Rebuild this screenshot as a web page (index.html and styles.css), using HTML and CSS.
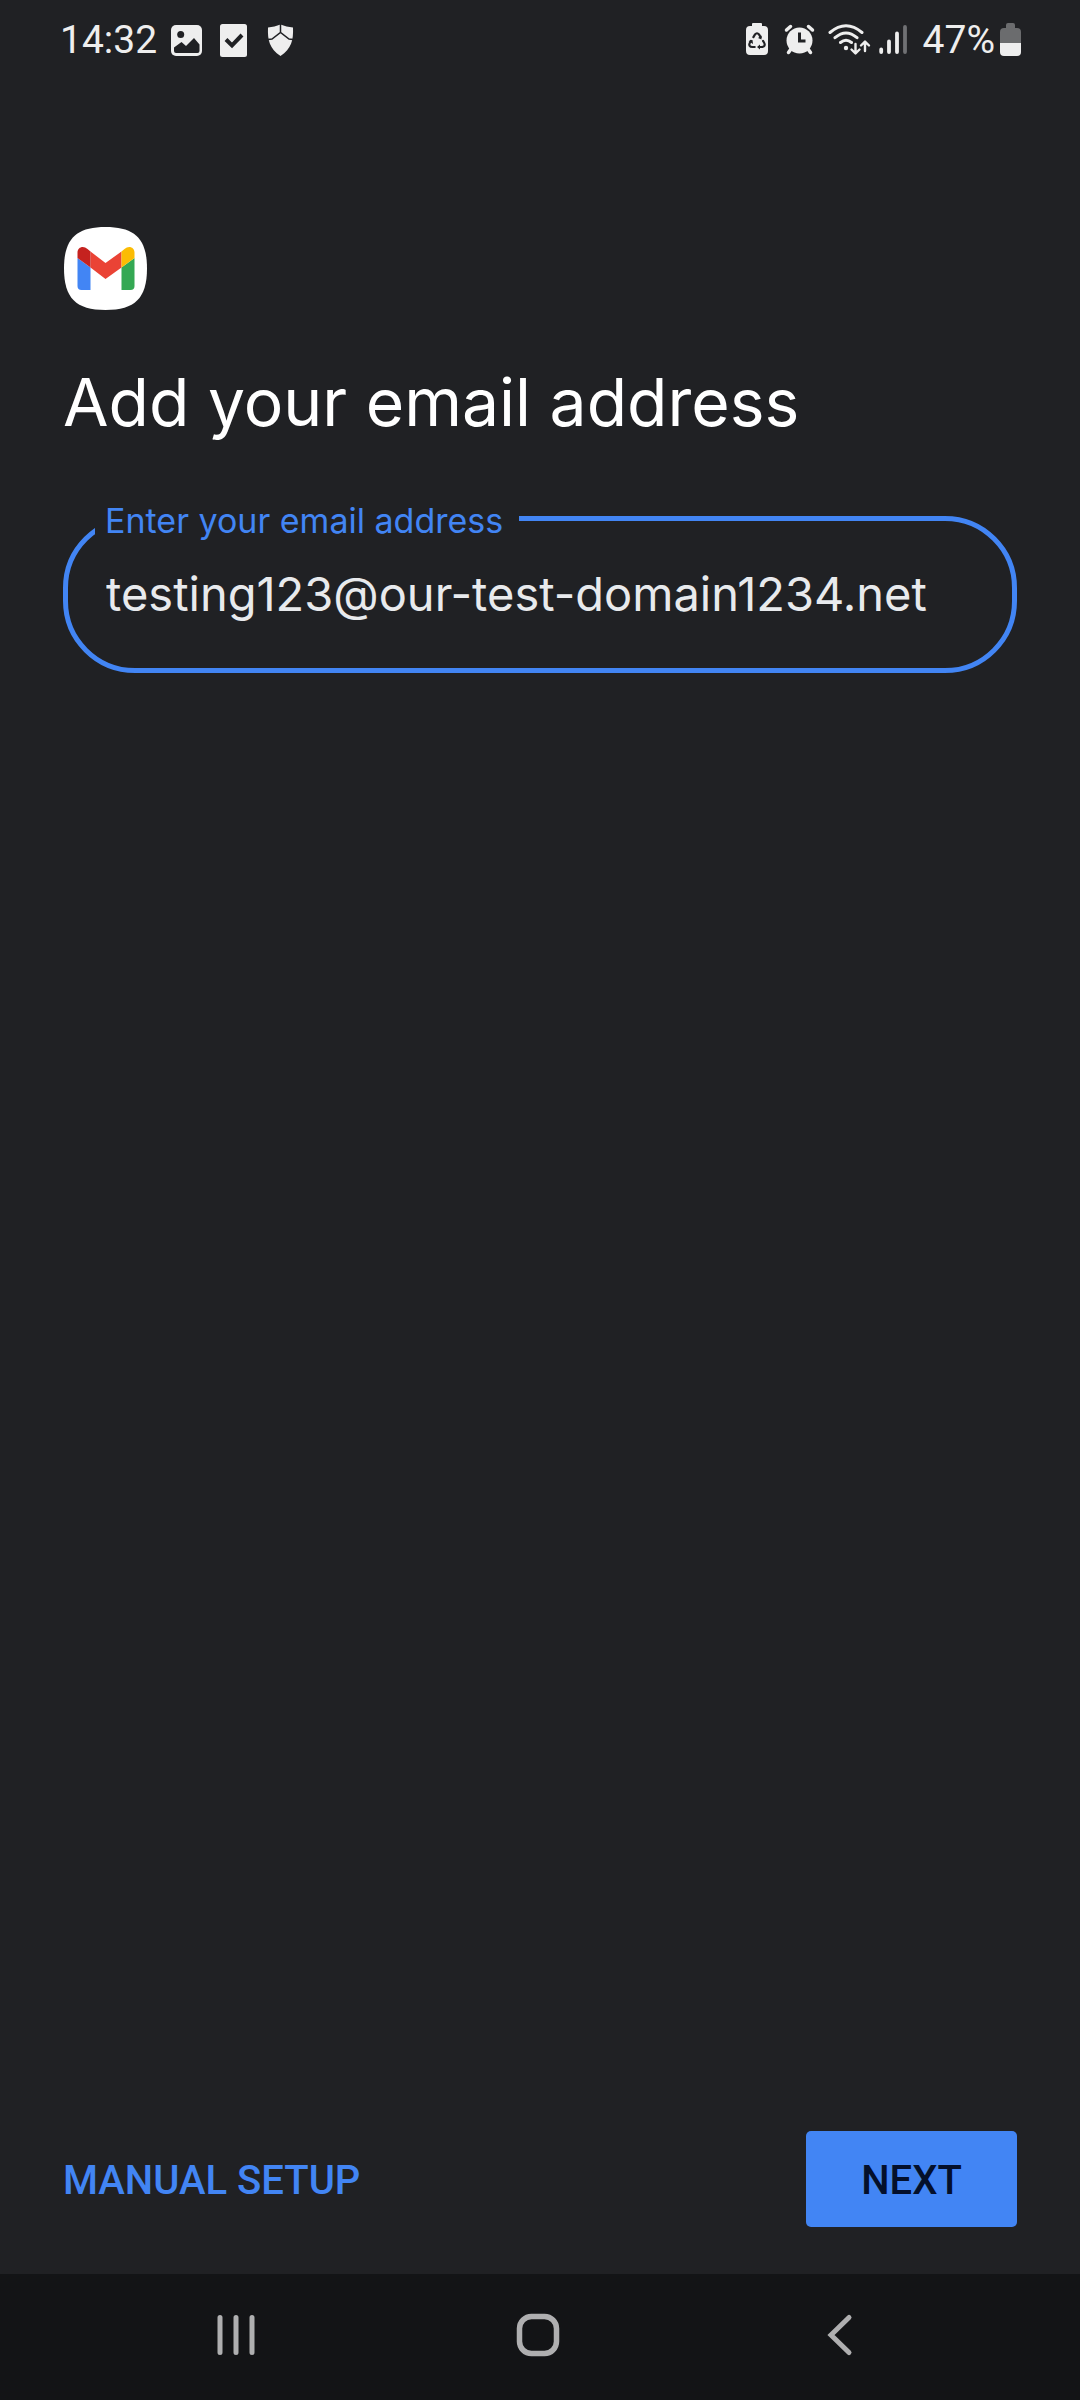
FILE: index.html
```html
<!DOCTYPE html>
<html lang="en">
<head>
<meta charset="utf-8">
<meta name="viewport" content="width=device-width, initial-scale=1">
<title>Add your email address</title>
<link rel="stylesheet" href="styles.css">
</head>
<body>
<header class="status">
  <div class="status-left">
    <span>14:32</span>
    <div class="notices">
      <svg width="32" height="34" viewBox="172 23 32 34" aria-hidden="true">
        <rect x="172" y="25" width="31" height="31" rx="5" fill="#eee"/>
        <circle cx="181.700" cy="34.500" r="3.500" fill="#202124"/>
        <path d="M175 51v-3.500l7.500-5.500 4.500 4 8-8 5.500 6.500V51q0 2-2 2h-21.500q-2 0-2-2z" fill="#202124"/>
      </svg>
      <svg width="32" height="34" viewBox="219 23 32 34" aria-hidden="true">
        <rect x="221" y="24" width="27" height="33" rx="2.500" fill="#eee"/>
        <path d="M227 39.500l6 6 10-10.500" fill="none" stroke="#202124" stroke-width="4"/>
      </svg>
      <svg width="32" height="34" viewBox="266 23 32 34" aria-hidden="true">
        <path d="M281.500 24.500c-4 1.500-8 2.500-12.500 3-.5 13 1.500 21 12.500 28.500 11-7.500 13-15.500 12.500-28.500-4.500-.5-8.500-1.500-12.500-3z" fill="#eee"/>
        <path d="M281.500 24v9M269 39.500l4-.5 8.500-6.500 8.500 6.500 4 .5" fill="none" stroke="#202124" stroke-width="1.500"/>
      </svg>
    </div>
  </div>
  <div class="status-right">
    <svg width="35" height="34" viewBox="741 23 35 34" aria-hidden="true">
      <path d="M752 26v-2q0-1 1-1h8q1 0 1 1v2h2q4 0 4 4v21q0 4-4 4h-14q-4 0-4-4V30q0-4 4-4z" fill="#eee"/>
      <path d="M757 47h-4.500c-3 0-4-2-2.500-4.500l5-8q2-2.500 4 0l5 8c1.500 2.500.5 4.500-2.500 4.500z" pathLength="30" stroke-dasharray="7 3" stroke-dashoffset="-1.500" fill="none" stroke="#202124" stroke-width="2.200" stroke-linecap="round"/>
      <path d="M760 44.500v5l-3-2.500zM761.500 35.500v4l-3.500-1.500zM748.500 41l4-1 .5 4z" fill="#202124"/>
    </svg>
    <svg width="35" height="34" viewBox="784 23 35 34" aria-hidden="true">
      <circle cx="799.500" cy="40.500" r="13" fill="#eee"/>
      <path d="M786.500 30l4-3.500M812.500 30l-4-3.500M791 49l-2.500 3.500M808 49l2.500 3.500" stroke="#eee" stroke-width="3.500" stroke-linecap="round"/>
      <path d="M799.500 32.500v8.500h6" fill="none" stroke="#202124" stroke-width="3"/>
    </svg>
    <svg width="44" height="34" viewBox="827 23 44 34" aria-hidden="true">
      <g fill="none" stroke="#eee" stroke-width="3" stroke-linecap="round">
        <path d="M830 32.500q16-13.500 32 0M835 37.700q11-9.500 22 0M840.500 42.500q5.500-4.500 11 0"/>
        <path d="M855.500 44v9M851.500 49.500l4 4 4-4M865 51v-9M861 45.500l4-4 4 4" stroke-width="2.400" stroke-linejoin="round"/>
      </g>
      <circle cx="846" cy="48" r="2.200" fill="#eee"/>
    </svg>
    <svg width="36" height="34" viewBox="879 23 36 34" aria-hidden="true">
      <path d="M881.200 49.500v2.500M889 41.500V52M897 33.500V52" stroke="#eee" stroke-width="3.800" stroke-linecap="round"/>
      <path d="M905 27V52" stroke="#707174" stroke-width="3.800" stroke-linecap="round"/>
    </svg>
    <span class="battery">47%
      <svg width="24" height="34" viewBox="999 23 24 34" aria-hidden="true">
        <path d="M1006 28v-3q0-2 2-2h5q2 0 2 2v3h2q4 0 4 4v11h-21V32q0-4 4-4z" fill="#6b6c6e"/>
        <path d="M1000 43h21v9q0 4-4 4h-13q-4 0-4-4z" fill="#eee"/>
      </svg>
    </span>
  </div>
</header>

<form class="setup">
  <svg class="logo" viewBox="0 0 83 83" role="img" aria-label="Gmail">
    <path d="M41.500 0C71 0 83 12 83 41.500S71 83 41.500 83 0 71 0 41.500 12 0 41.500 0z" fill="#fff"/>
    <path d="M13.500 31l13 9.500V63h-9q-4 0-4-4z" fill="#4285f4"/>
    <path d="M57.500 40.500l13-9.500v28q0 4-4 4h-9z" fill="#34a853"/>
    <path d="M26.500 24.500l15 11.500 16-11.500v16L41.500 52l-15-11.500z" fill="#ea4335"/>
    <path d="M13.500 31v-5.500c0-5.500 6-7.500 10-3.500l3 2.500v16z" fill="#c5221f"/>
    <path d="M57.500 24.500l3-2.500c4-4 10-2 10 3.500V31l-13 9.500z" fill="#fbbc04"/>
  </svg>
  <h1>Add your email address</h1>
  <div class="field">
    <label for="email">Enter your email address</label>
    <input id="email" type="email" value="testing123@our-test-domain1234.net" spellcheck="false">
  </div>
  <div class="actions">
    <button type="button" class="manual">MANUAL SETUP</button>
    <button type="button" class="next">NEXT</button>
  </div>
</form>

<nav class="system-nav">
  <button type="button" aria-label="Recent apps">
    <svg width="44" height="44" viewBox="0 0 44 44"><path d="M6 4.500v35M22 4.500v35M38 4.500v35" stroke="#afafb0" stroke-width="5" stroke-linecap="round"/></svg>
  </button>
  <button type="button" aria-label="Home">
    <svg width="44" height="44" viewBox="0 0 44 44"><rect x="3.500" y="3.500" width="37" height="37" rx="12" fill="none" stroke="#afafb0" stroke-width="5.500"/></svg>
  </button>
  <button type="button" aria-label="Back">
    <svg width="44" height="44" viewBox="0 0 44 44"><path d="M31 4.500L13 22l18 17.500" fill="none" stroke="#afafb0" stroke-width="5" stroke-linecap="round"/></svg>
  </button>
</nav>
</body>
</html>
```
FILE: styles.css
```css
* {
  box-sizing: border-box;
}

body {
  margin: 0;
  min-height: 100vh;
  display: flex;
  flex-direction: column;
  background: #202124;
  color: #fff;
  font-family: Inter, sans-serif;
}

svg {
  display: block;
  flex: none;
}

button {
  border: 0;
  padding: 0;
  background: none;
  font: 500 40px/48px Roboto, sans-serif;
  cursor: pointer;
}

.status {
  display: flex;
  align-items: center;
  justify-content: space-between;
  height: 80px;
  padding: 0 57px 0 60px;
  color: #eee;
  font: 39px/48px Roboto, sans-serif;
}

.status-left {
  display: flex;
  align-items: center;
  gap: 14px;
}

.notices {
  display: flex;
  gap: 15px;
}

.status-right {
  display: flex;
  align-items: center;
  gap: 8px;
}

.battery {
  display: flex;
  align-items: center;
  gap: 4px;
}

.setup {
  flex: 1;
  display: flex;
  flex-direction: column;
  padding: 147px 63px 47px;
}

.logo {
  width: 83px;
  height: 83px;
  margin-left: 1px;
}

h1 {
  margin: 52px 0 74px;
  font-size: 66px;
  line-height: 80px;
  font-weight: 400;
}

.field {
  position: relative;
  border: 5px solid #4285f4;
  border-radius: 72px;
}

.field label {
  position: absolute;
  top: -20px;
  left: 27px;
  padding: 0 16px 0 10px;
  background: #202124;
  color: #4285f4;
  font-size: 34px;
  line-height: 40px;
}

.field input {
  display: block;
  width: 100%;
  height: 147px;
  padding: 0 38px 2px;
  border: 0;
  outline: 0;
  border-radius: 67px;
  background: none;
  color: #e8eaed;
  font: 47px/56px Inter, sans-serif;
}

.actions {
  display: flex;
  align-items: center;
  justify-content: space-between;
  margin-top: auto;
}

.manual,
.next {
  height: 96px;
  padding-top: 4px;
}

.manual {
  color: #4285f4;
}

.next {
  width: 211px;
  border-radius: 5px;
  background: #4285f4;
  color: #04102b;
}

.system-nav {
  display: grid;
  grid-template-columns: repeat(3, 1fr);
  height: 126px;
  padding: 0 89px 4px 85px;
  background: #131416;
}

.system-nav button {
  display: grid;
  place-items: center;
}
```
